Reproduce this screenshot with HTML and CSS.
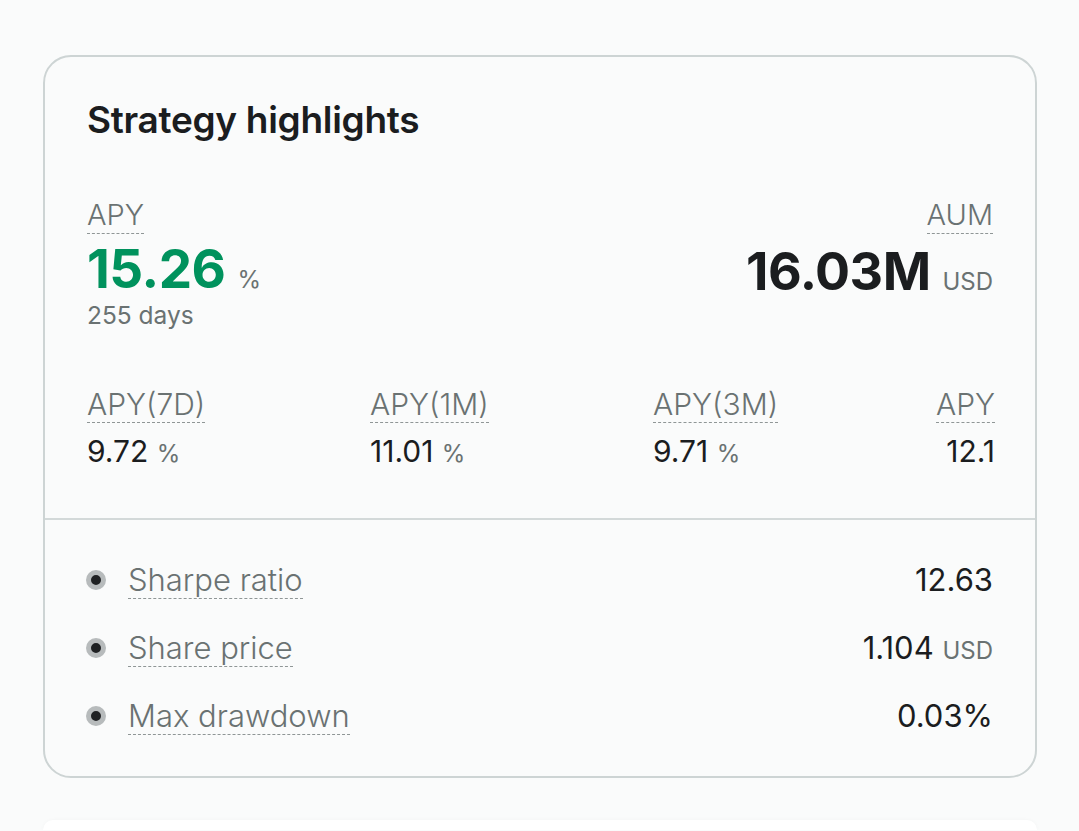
FILE: index.html
```html
<!DOCTYPE html>
<html lang="en">
<head>
    <meta charset="UTF-8">
    <meta name="viewport" content="width=device-width, initial-scale=1.0">
    <title>Strategy highlights</title>
    <link rel="stylesheet" href="styles.css">
</head>
<body>
    <div class="card">
        <div class="card-top">
            <h2 class="card-title">Strategy highlights</h2>

            <!-- APY and AUM headline figures -->
            <div class="headline">
                <div class="metric">
                    <span class="tip">APY</span>
                    <div class="big green">15.26 <span class="unit">%</span></div>
                    <div class="sub">255 days</div>
                </div>
                <div class="metric right">
                    <span class="tip">AUM</span>
                    <div class="big">16.03M <span class="unit">USD</span></div>
                </div>
            </div>

            <div class="periods">
                <div class="period">
                    <span class="tip">APY(7D)</span>
                    <div class="value">9.72 <span class="unit">%</span></div>
                </div>
                <div class="period">
                    <span class="tip">APY(1M)</span>
                    <div class="value">11.01 <span class="unit">%</span></div>
                </div>
                <div class="period">
                    <span class="tip">APY(3M)</span>
                    <div class="value">9.71 <span class="unit">%</span></div>
                </div>
                <div class="period last">
                    <span class="tip">APY</span>
                    <div class="value">12.1</div>
                </div>
            </div>
        </div>

        <ul class="stats">
            <li class="stat">
                <span class="dot"></span>
                <span class="tip">Sharpe ratio</span>
                <span class="stat-value">12.63</span>
            </li>
            <li class="stat">
                <span class="dot"></span>
                <span class="tip">Share price</span>
                <span class="stat-value">1.104 <span class="unit">USD</span></span>
            </li>
            <li class="stat">
                <span class="dot"></span>
                <span class="tip">Max drawdown</span>
                <span class="stat-value">0.03%</span>
            </li>
        </ul>
    </div>

    <div class="card next"></div>
</body>
</html>
```

FILE: styles.css
```css
body {
    margin: 0;
    padding: 55px 42px 0 43px;
    background-color: #fafbfb;
    color: #1b1d1f;
    font-family: Inter, "Noto Sans", sans-serif;
    overflow: hidden;
}

.card {
    border: 2px solid #cdd4d4;
    border-radius: 28px;
    background-color: #fafbfb;
}

/* next card peeking at the bottom of the screen */
.card.next {
    margin-top: 42px;
    height: 10px;
    border: none;
    border-radius: 28px 28px 0 0;
    background-color: #ffffff;
    box-shadow: 0 0 4px rgba(0, 0, 0, 0.03);
}

.card-top {
    padding: 30px 42px 40px 42px;
    border-bottom: 2px solid #d3d9d9;
}

.card-title {
    margin: 0;
    font-size: 37px;
    font-weight: 600;
    letter-spacing: -0.3px;
    line-height: 66px;
}

.tip {
    color: #6a7272;
    font-weight: 300;
    border-bottom: 1.5px dashed #8f9696;
    display: inline-block;
    line-height: 1.2;
}

.headline {
    display: flex;
    justify-content: space-between;
    margin-top: 45px;
}

.metric .tip {
    font-size: 29px;
}

.metric.right {
    text-align: right;
}

.big {
    margin-top: 5px;
    font-size: 53px;
    font-weight: 700;
    line-height: 60px;
    letter-spacing: -0.5px;
}

.metric.right .big {
    margin-top: 8px;
    font-size: 52px;
}

.green {
    color: #00925d;
}

.unit {
    font-size: 24px;
    font-weight: 400;
    color: #6a7272;
    letter-spacing: 0;
}

.sub {
    margin-top: -10px;
    font-size: 24.5px;
    color: #6a7272;
    line-height: 30px;
}

.periods {
    display: grid;
    grid-template-columns: 283px 283px 283px auto;
    margin-top: 56px;
}

.period .tip {
    font-size: 30px;
}

.period.last {
    text-align: right;
}

.value {
    margin-top: 4px;
    font-size: 30px;
    line-height: 48px;
}

.value .unit {
    font-size: 24px;
}

.stats {
    list-style: none;
    margin: 0;
    padding: 26px 42px 26px 42px;
}

.stat {
    display: flex;
    align-items: center;
    height: 68px;
}

.stat .tip {
    font-size: 31px;
    margin-left: 22px;
}

.dot {
    width: 10px;
    height: 10px;
    border-radius: 50%;
    background-color: #1f2123;
    border: 5px solid #b7bbbc;
    margin-left: -1px;
}

.stat-value {
    margin-left: auto;
    font-size: 31px;
}
```
